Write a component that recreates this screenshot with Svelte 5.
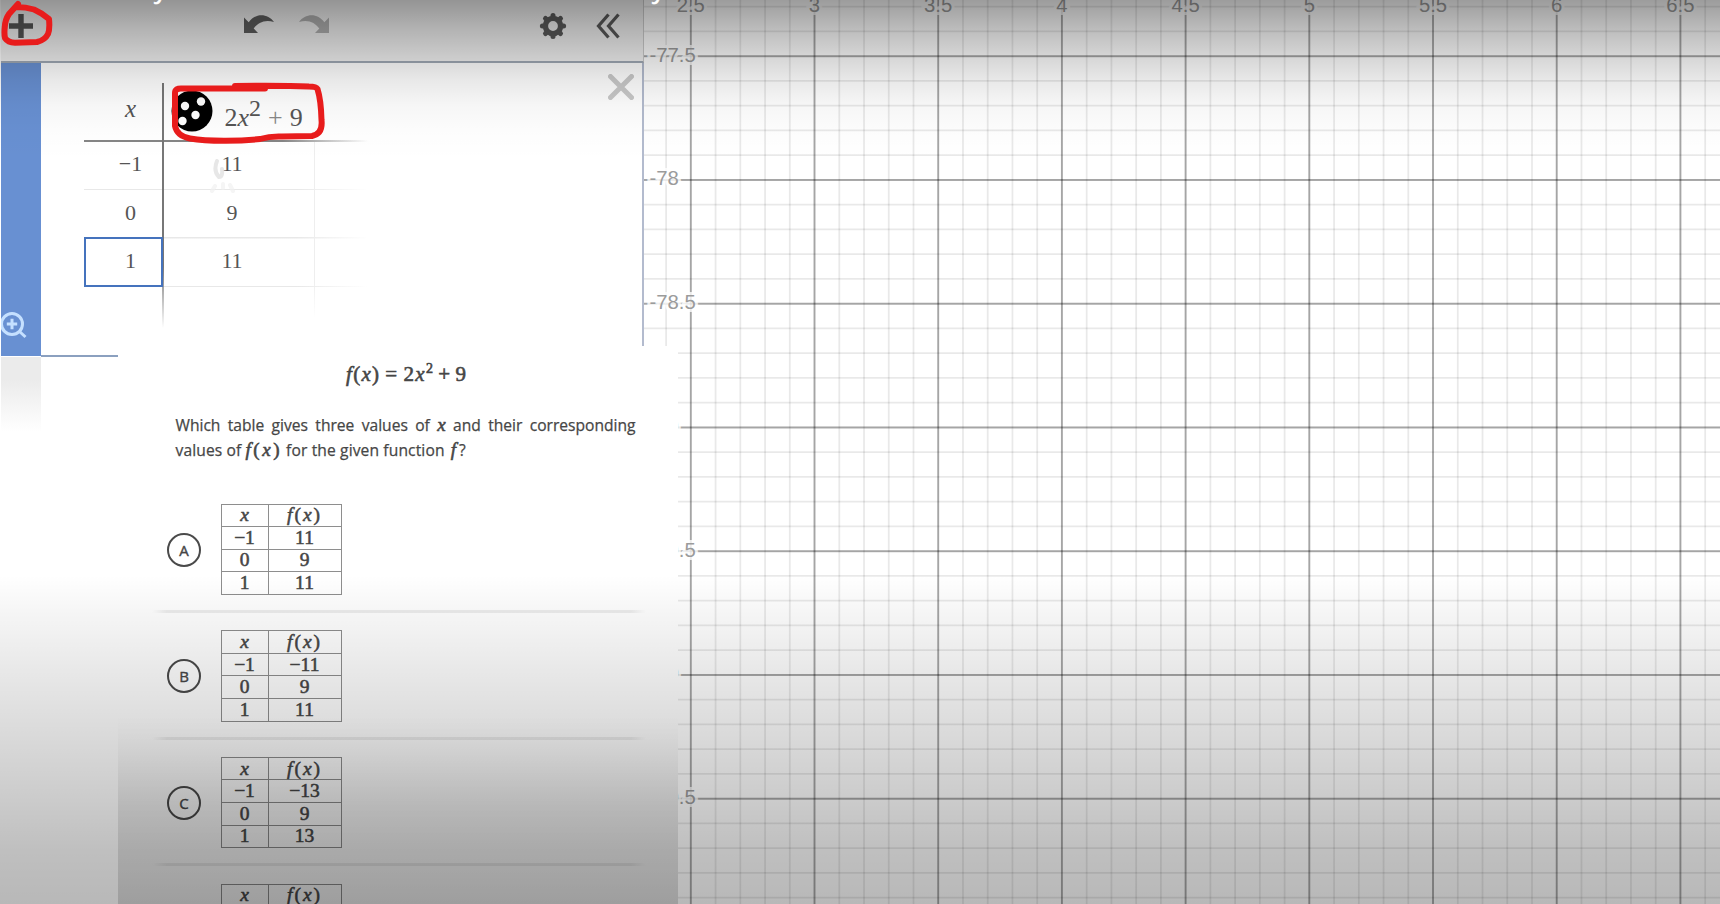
<script>
  const step = 123.7;
  const xs = Array.from({ length: 9 }, (_, i) => ({ at: 690.8 + i * step, label: String(2.5 + i * 0.5) }));
  const ys = Array.from({ length: 7 }, (_, i) => ({ at: 56.2 + i * 123.75, label: '-' + (77.5 + i * 0.5) }));
  const minorX = Array.from({ length: 44 }, (_, i) => 666.1 + i * 24.74);
  const minorY = Array.from({ length: 37 }, (_, i) => 6.7 + i * 24.75);

  const rows = [['−1', '11'], ['0', '9'], ['1', '11']];
  const options = [
    { key: 'A', values: [['−1', '11'], ['0', '9'], ['1', '11']] },
    { key: 'B', values: [['−1', '−11'], ['0', '9'], ['1', '11']] },
    { key: 'C', values: [['−1', '−13'], ['0', '9'], ['1', '13']] },
    { key: '', values: [] }
  ];
  const teeth = [0, 45, 90, 135, 180, 225, 270, 315];
</script>

<div class="stage">
  <svg class="graph" width="1720" height="904" viewBox="0 0 1720 904">
    {#each minorX as x}<line x1={x} x2={x} y1="0" y2="904" class="minor" />{/each}
    {#each minorY as y}<line x1="644" x2="1720" y1={y} y2={y} class="minor" />{/each}
    {#each xs as t}<line x1={t.at} x2={t.at} y1="0" y2="904" class="major" />{/each}
    {#each ys as t}<line x1="644" x2="1720" y1={t.at} y2={t.at} class="major" />{/each}
    {#each xs as t}<text x={t.at} y="11.5" text-anchor="middle">{t.label}</text>{/each}
    {#each ys as t}<text x="649.5" y={t.at + 5.5}>{t.label}</text>{/each}
  </svg>

  <aside class="sidebar">
    <header class="toolbar">
      <svg class="plus" width="26" height="26" viewBox="0 0 26 26"><path d="M13 1v24M1 13h24" stroke="#555" stroke-width="5.4" /></svg>
      <div class="history">
        <svg width="32" height="20" viewBox="0 0 32 20"><path d="M1 3.500 V19 H15 L10.700 14.400 C15 8.500 22 5 31 8 C25 -.5 12.500 -1.500 5.700 8.300 Z" fill="#5e5e5e" /></svg>
        <svg width="32" height="20" viewBox="0 0 32 20"><path d="M31 3.500 V19 H17 L21.300 14.400 C17 8.500 10 5 1 8 C7 -.5 19.500 -1.500 26.300 8.300 Z" fill="#b0b0b0" /></svg>
      </div>
      <svg class="gear" width="28" height="28" viewBox="-14 -14 28 28">
        <circle r="7.600" fill="none" stroke="#5a5a5a" stroke-width="5.400" />
        {#each teeth as a}<line y1="-9" y2="-10.600" stroke="#5a5a5a" stroke-width="5" stroke-linecap="round" transform="rotate({a})" />{/each}
      </svg>
      <svg class="collapse" width="24" height="26" viewBox="0 0 24 26"><path d="M12.500 1.500 2.500 13l10 11.500M22.500 1.500 12.500 13l10 11.500" fill="none" stroke="#5a5a5a" stroke-width="3.200" /></svg>
    </header>
    <div class="expression">
      <div class="gutter">
        <svg width="28" height="28" viewBox="0 0 28 28"><circle cx="11" cy="12" r="10.500" /><path d="M11 6.800v10.400M5.800 12h10.400M18.500 19.500l6 5.500" /></svg>
      </div>
      <div class="values">
        <div class="row head">
          <div class="cell"><i>x</i></div>
          <div class="cell formula">
            <svg width="42" height="42" viewBox="-21 -21 42 42"><circle r="20.500" /><g fill="#fff"><circle cx="-7" cy="-5" r="4.200" /><circle cx="9" cy="-9.500" r="4.200" /><circle cx="3.500" cy="4" r="4.200" /><circle cx="-9.500" cy="10" r="4.200" /></g></svg>
            <span>2<i>x</i><sup>2</sup><span class="op">+</span>9</span>
          </div>
        </div>
        {#each rows as r, i}
          <div class="row"><div class="cell" class:active={i === 2}>{r[0]}</div><div class="cell out">{r[1]}</div></div>
        {/each}
        <svg class="trace" width="26" height="36" viewBox="0 0 26 36"><path d="M7 2Q3 12 9 18Q13 18 12 10" /><path class="dim" d="M2 32l3-5M13 25v4M20 26l3 6" /></svg>
      </div>
      <svg class="close" width="26" height="26" viewBox="0 0 26 26"><path d="M2.500 2.500l21 21M23.500 2.500l-21 21" stroke="#c9c9c9" stroke-width="5" stroke-linecap="round" /></svg>
    </div>
    <div class="below"><div class="strip"></div></div>
  </aside>

  <section class="question">
    <div class="equation"><i>f</i>(<i>x</i>)<span class="eq">=</span>2<i>x</i><sup>2</sup><span class="plus-op">+</span>9</div>
    <div class="prompt">
      <div class="line spread">Which table gives three values of <em>x</em> and their corresponding</div>
      <div class="line second">values of <em class="fx">f<b>(</b>x<b>)</b></em> for the given function <em class="fn">f</em>?</div>
    </div>
    <div class="options">
      {#each options as o}
        <div class="option">
          <div class="bubble" class:hidden={!o.key}>{o.key}</div>
          <table>
            <tbody>
              <tr><td><i>x</i></td><td><i>f</i>(<i>x</i>)</td></tr>
              {#each o.values as v}<tr><td>{v[0]}</td><td>{v[1]}</td></tr>{/each}
            </tbody>
          </table>
        </div>
      {/each}
    </div>
    <div class="cardshade"></div>
  </section>

  <div class="shade"></div>
  <svg class="marks" width="1720" height="904" viewBox="0 0 1720 904">
    <text x="154" y="-2">y</text><text x="652" y="-2">y</text>
    <g fill="none" stroke="#e81c1c" stroke-width="6" stroke-linecap="round" stroke-linejoin="round">
      <path d="M18 4 L9 14 Q5 20 4.800 27 Q4 33 5 38 Q8 42.500 15 42.800 L37 42 Q45 40 48 34 Q50 29 49 19 Q42 13 34 9.500 Q26 7 16 7" />
      <path d="M265 88.500 H182 Q175 88 175 93 V126 Q177 136 190 138.500 C210 142 242 141 260 139 Q270 136 282 136.500 L312 136 Q323 134 321.500 120 Q321 100 317.500 89 Q316 86.500 309 86.500 Q285 85.500 235 86" />
    </g>
  </svg>
</div>

<style>
  :global(body) { margin: 0; background: #fff; }
  .stage { position: relative; width: 1720px; height: 904px; overflow: hidden; background: #fff; font-family: "Liberation Serif", serif; color: #555; }
  .graph, .shade, .marks { position: absolute; inset: 0; }
  .minor { stroke: #000; stroke-opacity: .085; stroke-width: 1.8; }
  .major { stroke: #000; stroke-opacity: .29; stroke-width: 1.900; }
  .graph text { font: 20.300px "Liberation Sans", sans-serif; fill: #9b9b9b; stroke: #fff; stroke-opacity: .8; stroke-width: 6px; paint-order: stroke; }
  .marks text { font: 26px "Open Sans", sans-serif; fill: #fff; stroke: #fff; stroke-width: .6px; }
  .sidebar { position: relative; width: 644px; height: 904px; display: flex; flex-direction: column; background: #fff; box-sizing: border-box; border-left: 1px solid #fff; }
  .toolbar { height: 63px; display: flex; align-items: flex-start; box-sizing: border-box; background: #f2f2f2; border-bottom: 2px solid #a0a9b5; padding-top: 13px; border-right: 1px solid #ccc; }
  .toolbar svg { display: block; flex: none; }
  .plus { margin-left: 7px; }
  .history { display: flex; gap: 23px; margin: 1px 0 0 209px; }
  .gear { margin: -1px 0 0 209px; }
  .collapse { margin-left: 29px; }
  .expression { display: flex; height: 283px; position: relative; box-sizing: border-box; border-right: 2.500px solid #b3bbce; }
  .gutter { width: 40px; height: 293px; flex: none; background: #6890d2; display: flex; align-items: flex-end; padding-bottom: 16px; box-sizing: border-box; }
  .gutter svg { fill: none; stroke: #c5e0ff; stroke-width: 3; }
  .values { margin: 20px 0 0 43px; width: 284px; height: 246px; position: relative; font-size: 22px; }
  .values::before { content: ""; position: absolute; left: 77.500px; top: 0; width: 2px; height: 245px; background: linear-gradient(#777 0 75%, transparent); }
  .values::after { content: ""; position: absolute; left: 230px; top: 59px; width: 1px; height: 175px; background: linear-gradient(#eee 80%, transparent); }
  .row { display: flex; height: 48.400px; background: linear-gradient(90deg, #e8e8e8 75%, transparent) bottom / 100% 1.500px no-repeat; }
  .row.head { height: 59px; background: linear-gradient(90deg, #858585 70%, transparent) bottom / 100% 2px no-repeat; }
  .cell { width: 79px; box-sizing: border-box; display: flex; align-items: center; justify-content: center; flex: none; padding-left: 14px; padding-bottom: 4px; }
  .cell.out { width: 125px; padding: 0 0 3.500px 13px; }
  .cell.active { border: 2.500px solid #4573bd; margin-top: -2px; height: 50px; padding-bottom: 1px; position: relative; background: #fff; }
  .head .cell { font-size: 25px; padding-bottom: 8px; }
  .head .formula { width: 160px; padding: 0 0 0 7.500px; justify-content: flex-start; align-items: flex-start; font-size: 26px; }
  .formula svg { margin-top: 7px; flex: none; }
  .formula > span { white-space: nowrap; margin: 20px 0 0 12px; line-height: 30px; }
  sup { line-height: 0; }
  .formula sup { font-size: 24px; vertical-align: 10px; }
  .op { margin: 0 7px; font-size: 26px; color: #888; }
  .trace { position: absolute; left: 126px; top: 76px; fill: none; stroke: #dedede; stroke-width: 4; stroke-linecap: round; opacity: .7; }
  .trace .dim { stroke: #f1f1f1; }
  .close { position: absolute; right: 8px; top: 11px; }
  .below { flex: 1; }
  .strip { width: 40px; height: 75px; background: linear-gradient(#ebebeb 30%, #fff); }
  .below::before { content: ""; display: block; height: 8.500px; margin-left: 40px; width: 77px; border-bottom: 2px solid #8ba0bf; }
  .question { position: absolute; left: 118px; top: 346px; width: 560px; height: 558px; background: #fff; overflow: hidden; color: #464646; }
  .equation { height: 55px; padding: 14px 0 0 228px; line-height: 28px; box-sizing: border-box; font-size: 21px; letter-spacing: 1.300px; white-space: nowrap; -webkit-text-stroke: .6px; }
  .equation sup { font-size: 14px; }
  .eq { margin: 0 5px; }
  .plus-op { margin: 0 4px; }
  .prompt { padding: 12px 0 0 57.500px; width: 517.500px; font: 15.600px/25px "Open Sans", sans-serif; height: 102px; box-sizing: border-box; -webkit-text-stroke: .25px; }
  .line { white-space: nowrap; height: 25px; }
  .spread { text-align-last: justify; }
  .second { letter-spacing: .12px; }
  em { font: italic 19px/20px "Liberation Serif", serif; -webkit-text-stroke: .6px; }
  .fx { letter-spacing: 2.500px; }
  .fn { letter-spacing: 3px; margin-left: 2px; }
  em b { font-weight: normal; font-style: normal; }
  .options { display: flex; flex-direction: column; padding-left: 34px; }
  .option { flex: none; height: 126.700px; width: 494px; box-sizing: border-box; display: flex; align-items: flex-start; padding: .5px 0 0 15px; background: linear-gradient(90deg, transparent, rgba(0,0,0,.07) 3% 97%, transparent) 0 107px / 100% 3px no-repeat; }
  .bubble { width: 34px; height: 34px; margin-top: 29px; box-sizing: border-box; border: 2.600px solid #4a4a4a; border-radius: 50%; display: flex; align-items: center; justify-content: center; font: 15px "Open Sans", sans-serif; -webkit-text-stroke: .4px; flex: none; }
  .bubble.hidden { visibility: hidden; }
  table { margin-left: 19.500px; border-collapse: collapse; font-size: 19.500px; line-height: 20px; table-layout: fixed; width: 121px; -webkit-text-stroke: .55px; }
  td { border: 1.500px solid #8e8e8e; padding: 0; text-align: center; height: 21.600px; box-sizing: content-box; }
  td:first-child { width: 46px; }
  tr:first-child td:last-child { letter-spacing: 2px; }
  .cardshade { position: absolute; inset: 0; background: linear-gradient(transparent 370px, rgba(0,0,0,.03) 408px, rgba(0,0,0,.09) 460px, rgba(0,0,0,.14)); }
  .shade { background: linear-gradient(rgba(0,0,0,.39) 0, rgba(0,0,0,.26) 30px, rgba(0,0,0,.165) 56px, rgba(0,0,0,.09) 80px, rgba(0,0,0,.035) 105px, rgba(0,0,0,.01) 130px, transparent 160px, transparent 575px, rgba(0,0,0,.035) 610px, rgba(0,0,0,.095) 675px, rgba(0,0,0,.135) 720px, rgba(0,0,0,.205) 800px, rgba(0,0,0,.25) 850px, rgba(0,0,0,.28) 904px); }
</style>
